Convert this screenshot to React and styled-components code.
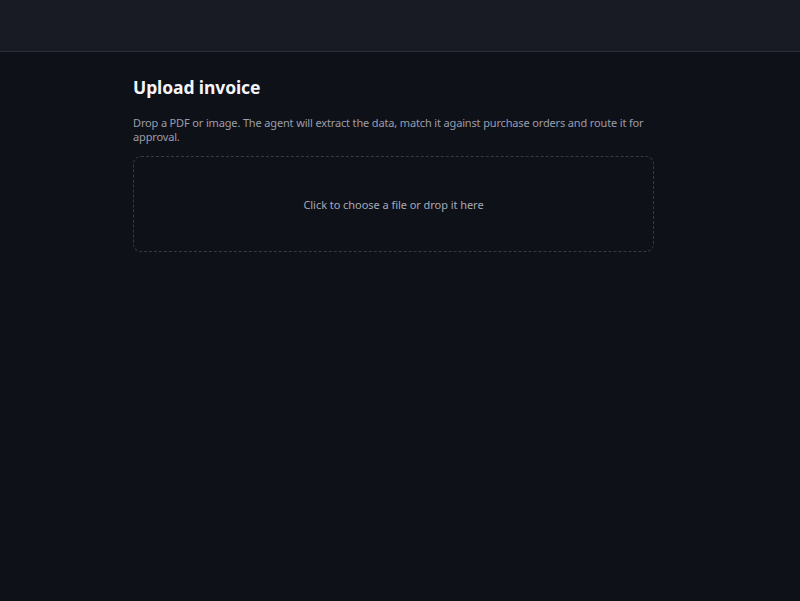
import React from "react";
import styled, { createGlobalStyle } from "styled-components";

const Global = createGlobalStyle`
  html, body { margin: 0; padding: 0; background: #0f1119; }
  body { font-family: "Noto Sans", "Open Sans", sans-serif; color: #e8e9ee; }
  * { box-sizing: border-box; }
`;

const Page = styled.div`
  min-height: 601px;
  background: #0f1119;
  display: flex;
  flex-direction: column;
`;

const TopBar = styled.header`
  height: 52px;
  background: #181b24;
  border-bottom: 1px solid #2c2f3a;
`;

const Main = styled.main`
  width: 521px;
  margin-left: calc(50% - 267px);
  padding-top: 23px;
  display: flex;
  flex-direction: column;
`;

const Title = styled.h1`
  margin: 0;
  font-size: 17.5px;
  line-height: 24px;
  font-weight: 700;
  color: #f4f5f8;
  letter-spacing: -0.1px;
`;

const Lead = styled.p`
  margin: 17px 0 12px;
  font-size: 11px;
  line-height: 14px;
  letter-spacing: -0.15px;
  color: #9a9dab;
`;

const DropZone = styled.button`
  height: 96px;
  border: 1px dashed #363a48;
  border-radius: 8px;
  background: transparent;
  color: #a5a8b6;
  font-family: inherit;
  font-size: 11px;
  letter-spacing: -0.05px;
  cursor: pointer;
  display: flex;
  align-items: center;
  justify-content: center;
`;

export default function App() {
  return (
    <>
      <Global />
      <Page>
        <TopBar />
        <Main>
          <Title>Upload invoice</Title>
          <Lead>
            Drop a PDF or image. The agent will extract the data, match it against purchase orders and route it for
            approval.
          </Lead>
          <DropZone type="button">Click to choose a file or drop it here</DropZone>
        </Main>
      </Page>
    </>
  );
}
